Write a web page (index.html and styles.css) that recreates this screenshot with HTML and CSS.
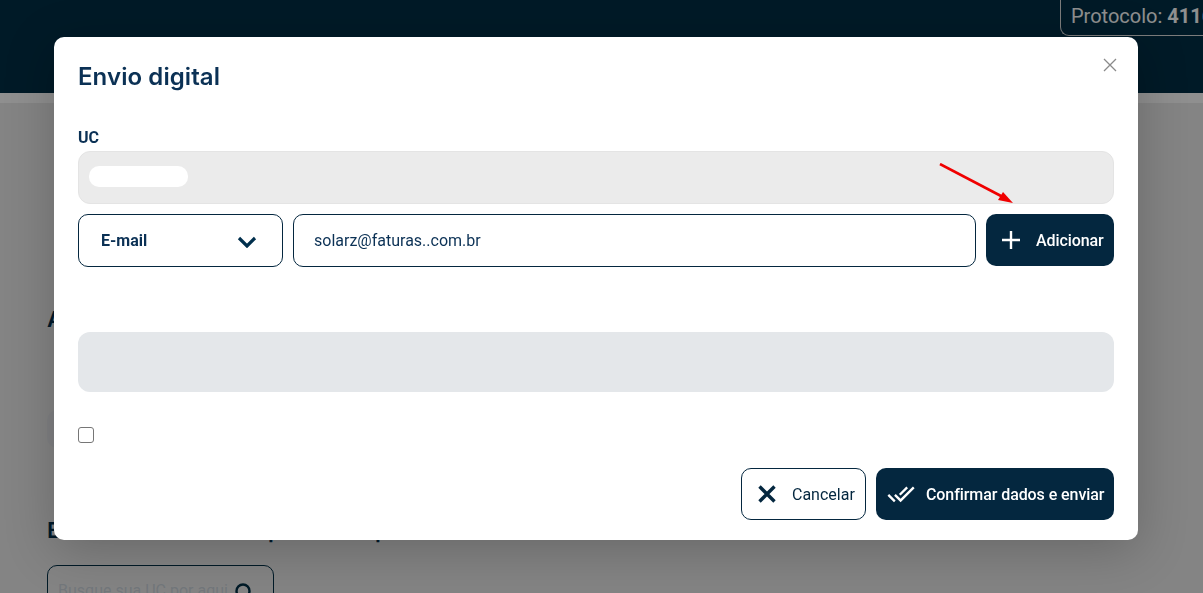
FILE: index.html
```html
<!DOCTYPE html>
<html lang="pt-BR">
<head>
<meta charset="utf-8">
<title>Envio digital</title>
<link rel="stylesheet" href="styles.css">
</head>
<body>
<div class="page">
  <header class="topbar">
    <div class="protocol">Protocolo: <strong>4116</strong></div>
  </header>
  <div class="band"></div>
  <main class="content">
    <h2 class="page-heading first">Ativos</h2>
    <div class="page-pill"></div>
    <h2 class="page-heading second">Escolha abaixo a UC para todo processo</h2>
    <div class="search">
      <span>Busque sua UC por aqui</span>
      <svg class="search-icon" viewBox="0 0 20 20" width="20" height="20"><circle cx="9" cy="9" r="6.500" fill="none" stroke="#002f47" stroke-width="2.400"/><path d="M14 14l5 5" stroke="#002f47" stroke-width="2.400" fill="none"/></svg>
    </div>
  </main>
</div>
<div class="overlay"></div>
<section class="modal">
  <h1 class="modal-title">Envio digital</h1>
  <button class="close" aria-label="Fechar">
    <svg viewBox="0 0 14 14" width="14" height="14"><path d="M1 1l12 12M13 1L1 13" stroke="#8a8a8a" stroke-width="1.300" fill="none"/></svg>
  </button>
  <label class="field-label">UC</label>
  <div class="uc-box"><span class="uc-chip"></span></div>
  <div class="row">
    <div class="select">
      <span>E-mail</span>
      <svg class="chevron" viewBox="0 0 20 12" width="20" height="12"><path d="M2 2l8 8 8-8" stroke="#002f4d" stroke-width="3.200" fill="none"/></svg>
    </div>
    <div class="input">solarz@faturas..com.br</div>
    <button class="btn primary add">
      <svg viewBox="0 0 20 20" width="20" height="20"><path d="M10 1v18M1 10h18" stroke="#fff" stroke-width="2.400" fill="none"/></svg>
      <span>Adicionar</span>
    </button>
  </div>
  <div class="list-box"></div>
  <div class="check-row"><span class="checkbox"></span></div>
  <div class="actions">
    <button class="btn outline cancel">
      <svg viewBox="0 0 20 20" width="20" height="20"><path d="M2.500 2.500l15 15M17.500 2.500l-15 15" stroke="#04273f" stroke-width="3.400" fill="none"/></svg>
      <span>Cancelar</span>
    </button>
    <button class="btn primary confirm">
      <svg viewBox="0 0 24 24" width="28" height="28"><path fill="#fff" d="M18 7l-1.410-1.410-6.340 6.340 1.410 1.410L18 7zm4.240-1.410L11.660 16.170 7.480 12l-1.410 1.410L11.660 19l12-12-1.420-1.410zM.41 13.410L6 19l1.410-1.410L1.830 12 .41 13.410z"/></svg>
      <span>Confirmar dados e enviar</span>
    </button>
  </div>
</section>
<svg class="arrow" width="80" height="46" viewBox="0 0 80 46"><path d="M1 1L63 33.500" stroke="#f00000" stroke-width="2.600" fill="none"/><path d="M74 40L59 37L64 29Z" fill="#f00000"/></svg>
</body>
</html>
```
FILE: styles.css
```css
* { box-sizing: border-box; }
html, body { margin: 0; height: 100%; overflow: hidden; }
body { font-family: Roboto, "Liberation Sans", sans-serif; background: #ececec; color: #04273f; }
.page { height: 593px; overflow: hidden; }
.topbar { height: 93px; background: #002f47; display: flex; justify-content: flex-end; align-items: flex-start; overflow: hidden; }
.protocol { flex: none; width: 143px; height: 44px; margin-top: -8px; padding: 8px 0 0 10px; border: 1px solid #ddd; border-right: 0; border-radius: 9px 0 0 9px; color: #fff; font-size: 20px; line-height: 30px; white-space: nowrap; overflow: hidden; }
.band { height: 10px; background: #fff; }
.content { padding-left: 47px; display: flex; flex-direction: column; align-items: flex-start; }
.page-heading { margin: 0; font-family: Inter, sans-serif; font-size: 22px; font-weight: 600; line-height: 28px; color: #002f4d; white-space: nowrap; }
.first { margin-top: 202px; }
.page-pill { width: 100px; height: 38px; margin-top: 77px; background: #e5e7ea; border-radius: 10px; }
.second { margin-top: 68px; }
.search { width: 227px; height: 56px; margin-top: 21px; padding: 15px 10px; border: 1px solid #002f47; border-radius: 10px; display: flex; align-items: flex-start; gap: 6px; color: #cdd5dc; font-size: 16px; line-height: 19px; white-space: nowrap; }
.search-icon { flex: none; margin-top: 1px; }
.overlay { position: fixed; inset: 0; background: rgba(0,0,0,.44); }
.modal { position: absolute; left: 54px; top: 37px; width: 1084px; height: 503px; padding: 24px 24px 20px; background: #fff; border-radius: 10px; box-shadow: 0 10px 50px rgba(0,0,0,.22); display: flex; flex-direction: column; }
.modal > * { flex: none; }
.modal-title { margin: 0; font-family: Inter, sans-serif; font-size: 24px; font-weight: 600; line-height: 32px; letter-spacing: .08px; color: #0b3155; }
.close { position: absolute; right: 21px; top: 21px; width: 14px; height: 14px; padding: 0; border: 0; background: none; display: block; }
.close svg { display: block; }
.field-label { margin-top: 32px; height: 24px; font-size: 16px; font-weight: 700; line-height: 26px; color: #0b3155; }
.uc-box { height: 53px; margin-top: 2px; padding: 14px 10px; background: #ebebeb; border: 1px solid #e4e4e4; border-radius: 12px; }
.uc-chip { display: block; width: 99px; height: 21px; background: #fff; border-radius: 10px; }
.row { display: flex; gap: 10px; margin-top: 10px; height: 53px; align-items: flex-start; }
.select { width: 205px; height: 53px; padding: 0 25px 0 22px; border: 1px solid #04273f; border-radius: 10px; display: flex; align-items: center; justify-content: space-between; font-size: 16px; font-weight: 700; color: #0b3155; }
.chevron { margin-top: 3px; }
.input { flex: 1; height: 53px; padding: 0 20px; border: 1px solid #04273f; border-radius: 10px; display: flex; align-items: center; font-size: 16px; color: #0b3155; }
.btn { border-radius: 10px; display: flex; align-items: center; font-family: Roboto, sans-serif; font-size: 16px; font-weight: 500; padding: 0; }
.primary { background: #04273f; color: #fff; border: 0; }
.outline { background: #fff; color: #04273f; border: 1px solid #04273f; font-weight: 400; }
.add { width: 128px; height: 52px; padding-left: 15px; gap: 15px; letter-spacing: -.08px; }
.list-box { height: 60px; margin-top: 65px; background: #e4e7ea; border-radius: 12px; }
.check-row { margin-top: 35px; height: 16px; }
.checkbox { display: block; width: 16px; height: 16px; border: 1px solid #767676; border-radius: 3px; }
.actions { display: flex; justify-content: flex-end; gap: 10px; margin-top: 25px; }
.cancel { width: 125px; height: 52px; padding-left: 15px; gap: 15px; }
.confirm { width: 238px; height: 52px; padding-left: 11px; gap: 11px; letter-spacing: -.08px; }
.arrow { position: absolute; left: 939px; top: 163px; }
```
